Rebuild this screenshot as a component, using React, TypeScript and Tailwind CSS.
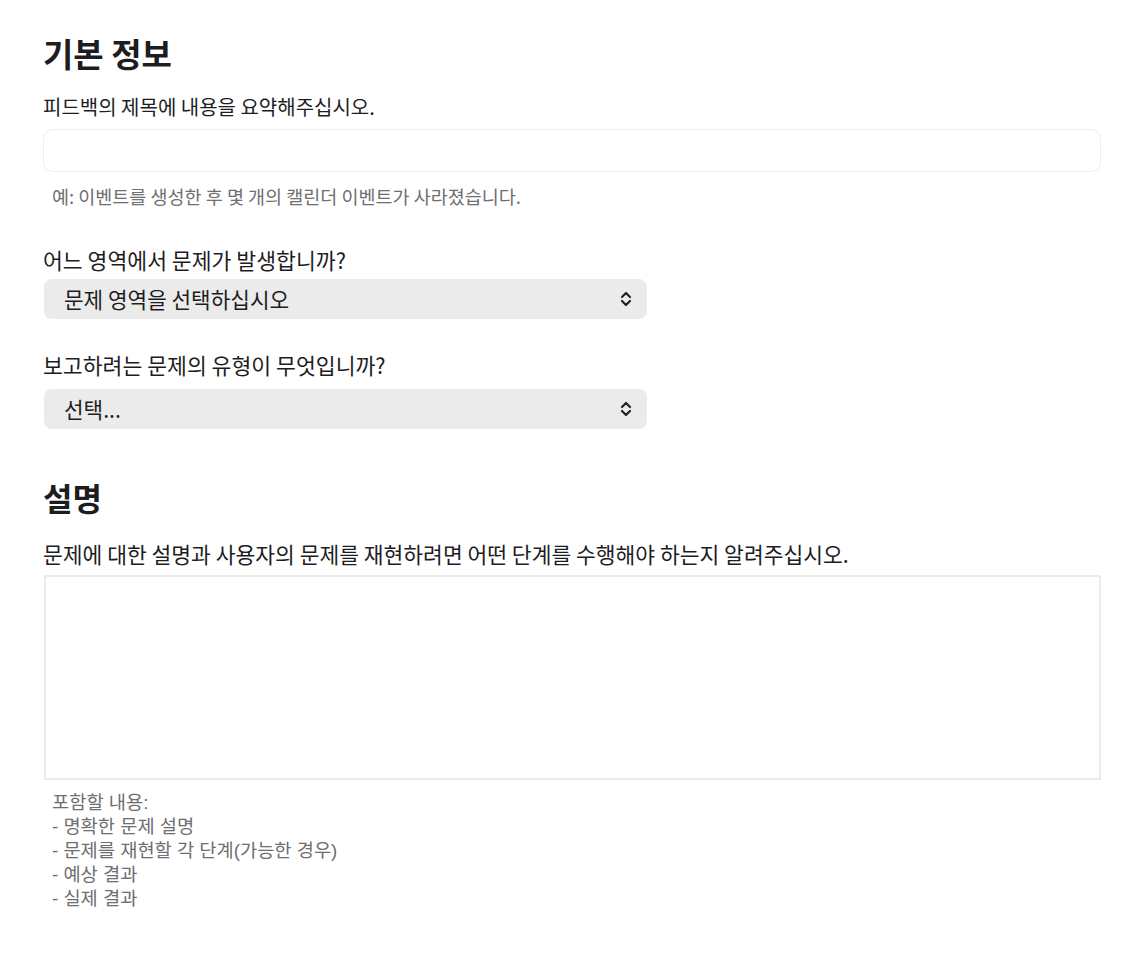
const font = { fontFamily: '"Noto Sans CJK KR", "Noto Sans", sans-serif' };
const helpFont = { fontFamily: '"Liberation Sans", "Noto Sans CJK KR", sans-serif' };

function SelectBox({ text }: { text: string }) {
  return (
    <div className="flex h-10 w-[603px] items-center justify-between rounded-lg bg-[#ebebeb] pl-5 pr-[14px] text-[21.3px] text-[#1d1d1f]">
      <span>{text}</span>
      <svg width="14" height="18" viewBox="0 0 14 18" fill="none" stroke="#222" strokeWidth="2.2" strokeLinecap="round" strokeLinejoin="round">
        <path d="M3 7 L7 3 L11 7" />
        <path d="M3 11 L7 15 L11 11" />
      </svg>
    </div>
  );
}

export default function App() {
  return (
    <div className="min-h-[960px] bg-white px-[43px] pt-[31px] text-[#1d1d1f]" style={font}>
      <h1 className="text-[33px] font-bold leading-[44px]">기본 정보</h1>
      <p className="mt-[18px] text-[20px] leading-[28px]">피드백의 제목에 내용을 요약해주십시오.</p>
      <div className="mt-[8px] h-[43px] w-full rounded-[10px] border border-[#eeeeee]" />
      <p className="mt-[12px] pl-[9px] text-[18.5px] leading-[24px] text-[#6e6e73]">
        예: 이벤트를 생성한 후 몇 개의 캘린더 이벤트가 사라졌습니다.
      </p>

      <p className="mt-[38px] text-[21.6px] leading-[28px]">어느 영역에서 문제가 발생합니까?</p>
      <div className="mt-[5px] pl-px">
        <SelectBox text="문제 영역을 선택하십시오" />
      </div>

      <p className="mt-[32px] text-[21.6px] leading-[28px]">보고하려는 문제의 유형이 무엇입니까?</p>
      <div className="mt-[10px] pl-px">
        <SelectBox text="선택..." />
      </div>

      <h2 className="mt-[46px] text-[32px] font-bold leading-[44px]">설명</h2>
      <p className="mt-[21px] text-[21.5px] leading-[28px]">
        문제에 대한 설명과 사용자의 문제를 재현하려면 어떤 단계를 수행해야 하는지 알려주십시오.
      </p>
      <div className="mt-[7px] ml-px h-[205px] border-2 border-[#ebebeb]" />
      <div className="mt-[11px] pl-[9px] text-[18.7px] leading-[24px] text-[#6e6e73]" style={helpFont}>
        <div>포함할 내용:</div>
        <div>- 명확한 문제 설명</div>
        <div>- 문제를 재현할 각 단계(가능한 경우)</div>
        <div>- 예상 결과</div>
        <div>- 실제 결과</div>
      </div>
    </div>
  );
}
